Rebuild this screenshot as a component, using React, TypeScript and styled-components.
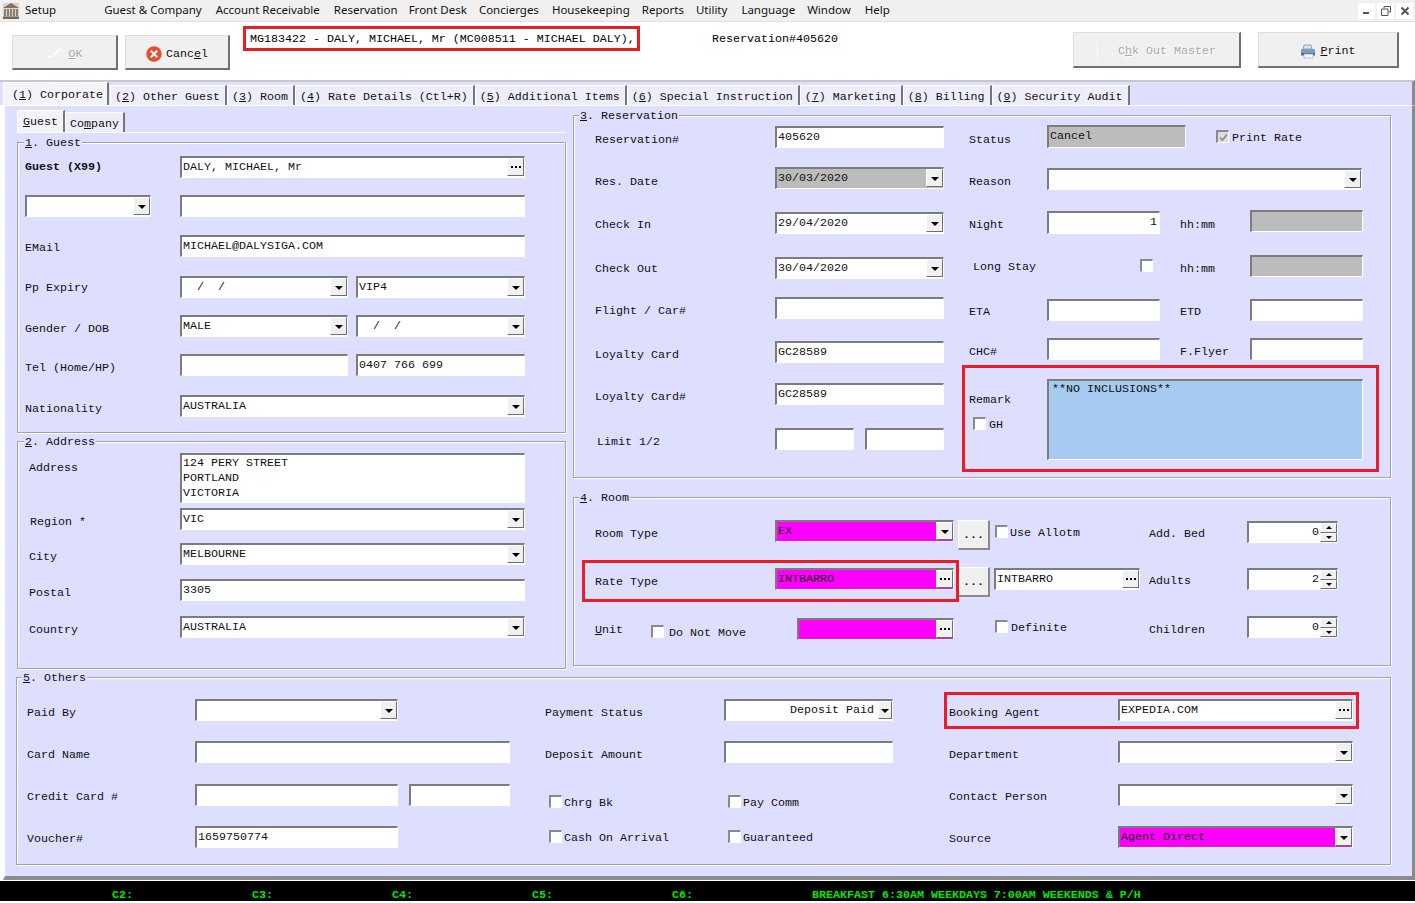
import React from 'react'
import styled, { createGlobalStyle, css } from 'styled-components'

const GlobalStyle = createGlobalStyle`
  html, body {
    margin: 0;
    padding: 0;
    background: #fff;
    overflow: hidden;
  }
  * { box-sizing: border-box; }
`

const LAVENDER = '#dedeff'
const MAGENTA = '#ff00ff'

type Placed = { $col?: string; $row?: number; $top?: number; $w?: number }

const place = css<Placed>`
  grid-column: ${p => p.$col ?? 'auto'};
  grid-row: ${p => p.$row ?? 'auto'};
  margin-top: ${p => p.$top ?? 0}px;
  ${p => (p.$w ? `width: ${p.$w}px;` : '')}
`

const Page = styled.div`
  width: 1415px;
  height: 903px;
  display: flex;
  flex-direction: column;
  font-family: 'Liberation Mono', 'Courier New', monospace;
  font-size: 11.67px;
  line-height: 14px;
  color: #111;
`

/* menu */
const MenuBar = styled.div`
  height: 22px;
  flex: none;
  display: flex;
  align-items: center;
  background: #f0f0f0;
  border-bottom: 1px solid #e2e2e2;
  font-family: 'Noto Sans', sans-serif;
  font-size: 11.5px;
  color: #111;
  padding-left: 2px;
`
const MenuItem = styled.span<{ $x: number }>`
  margin: 0 0 2px ${p => p.$x}px;
  white-space: nowrap;
`
const WindowButtons = styled.div`
  margin-left: auto;
  display: flex;
  gap: 2px;
  padding-right: 2px;
`
const WindowButton = styled.div`
  width: 17px;
  height: 16px;
  background: #fff;
  display: flex;
  align-items: center;
  justify-content: center;
`

/* toolbar */
const Toolbar = styled.div`
  height: 58px;
  flex: none;
  display: flex;
  align-items: flex-start;
  padding: 4px 16px 0 12px;
  background: #fff;
`
const ActionButton = styled.div<{ $w: number; $h: number; $mt: number; $ml?: number; $off?: boolean }>`
  width: ${p => p.$w}px;
  height: ${p => p.$h}px;
  margin-top: ${p => p.$mt}px;
  margin-left: ${p => p.$ml ?? 0}px;
  flex: none;
  display: flex;
  align-items: center;
  justify-content: center;
  gap: 4px;
  padding-top: 3px;
  background: #f0f0f0;
  border-style: solid;
  border-width: 1px 2px 2px 1px;
  border-color: #dcdcdc #707070 #707070 #dcdcdc;
  color: ${p => (p.$off ? '#a8a8a8' : '#111')};
  ${p => (p.$off ? 'text-shadow: 1px 1px 0 #fff;' : '')}
`
const GuestTitle = styled.div`
  width: 397px;
  height: 25px;
  margin-left: 13px;
  flex: none;
  border: 3px solid #ed1c24;
  padding: 3px 0 0 4px;
  white-space: nowrap;
  color: #000;
`
const ReservationNo = styled.div`
  margin: 6px 0 0 72px;
  color: #000;
`
const FaintTick = styled.span`
  width: 1px;
  height: 16px;
  background: #fff;
  margin-right: 16px;
`

/* top tabs */
const TabStrip = styled.div`
  height: 25px;
  flex: none;
  display: flex;
  align-items: flex-end;
  background: ${LAVENDER};
  border-top: 2px solid #c8c8c8;
  border-right: 3px solid #8a8a8a;
  padding-left: 3px;
`
const Tab = styled.div<{ $active?: boolean }>`
  flex: none;
  white-space: pre;
  background: ${p => (p.$active ? '#f4f4f8' : '#eeeefb')};
  border-top: 1px solid #fff;
  border-left: 1px solid #fff;
  border-right: 2px solid #777;
  ${p =>
    p.$active
      ? css`
          height: 23px;
          padding: 5px 5px 0 8px;
          width: 106px;
          margin-right: 1px;
        `
      : css`
          height: 20px;
          padding: 4px 5px 0 4px;
        `}
`
const TabBody = styled.div`
  flex: 1;
  min-height: 0;
  background: ${LAVENDER};
  border-top: 1px solid #fff;
  border-left: 2px solid #fff;
  border-right: 3px solid #8a8a8a;
  border-bottom: 4px solid #8c8c8c;
  margin-left: 3px;
  padding: 5px 0 0 12px;
`
const Columns = styled.div`
  display: grid;
  grid-template-columns: 549px 818px;
  column-gap: 7px;
  height: 558px;
`
const LeftColumn = styled.div`
  display: flex;
  flex-direction: column;
`
const RightColumn = styled.div`
  display: flex;
  flex-direction: column;
  gap: 19px;
  padding-top: 4px;
`
const SubTabs = styled.div`
  height: 22px;
  flex: none;
  display: flex;
  align-items: flex-end;
  border-bottom: 1px solid #fff;
  margin-bottom: 9px;
`
const SubTab = styled.div<{ $active?: boolean }>`
  height: ${p => (p.$active ? 22 : 20)}px;
  padding: ${p => (p.$active ? '4px 5px 0 5px' : '4px 4px 0 4px')};
  background: ${p => (p.$active ? '#f4f4f8' : '#eeeefb')};
  border-top: 1px solid #fff;
  border-left: 1px solid #fff;
  border-right: 2px solid #777;
  white-space: nowrap;
`

/* group boxes */
const Group = styled.section<{ $h: number; $mt?: number; $pt: number; $pl: number; $cols: string; $rows: string; $shift?: number; $width?: number }>`
  position: relative;
  flex: none;
  height: ${p => p.$h}px;
  ${p => (p.$width ? `width: ${p.$width}px;` : '')}
  margin-top: ${p => p.$mt ?? 0}px;
  margin-left: ${p => p.$shift ?? 0}px;
  padding: ${p => p.$pt}px 0 0 ${p => p.$pl}px;
  border: 1px solid #a2a2a2;
  box-shadow: inset 1px 1px 0 #fff, 1px 1px 0 #fff;
  display: grid;
  grid-template-columns: ${p => p.$cols};
  grid-template-rows: ${p => p.$rows};
  align-items: start;
`
const Legend = styled.span<{ $left: number }>`
  position: absolute;
  top: -7px;
  left: ${p => p.$left}px;
  padding: 0 1px;
  background: ${LAVENDER};
`
const RedBox = styled.div<{ $left: number; $topAt: number; $bw: number; $bh: number }>`
  position: absolute;
  left: ${p => p.$left}px;
  top: ${p => p.$topAt}px;
  width: ${p => p.$bw}px;
  height: ${p => p.$bh}px;
  border: 3px solid #ed1c24;
  pointer-events: none;
`

/* form parts */
const FieldLabel = styled.div<Placed & { $bold?: boolean; $indent?: number }>`
  ${place}
  white-space: nowrap;
  padding: 1px 0 0 ${p => p.$indent ?? 0}px;
  font-weight: ${p => (p.$bold ? 700 : 400)};
`
const sunken = css`
  border-style: solid;
  border-width: 2px 1px 1px 2px;
  border-color: #7c7c7c #fff #fff #7c7c7c;
`
const TextBox = styled.div<Placed & { $bg?: string; $h?: number; $right?: boolean }>`
  ${place}
  ${sunken}
  height: ${p => p.$h ?? 22}px;
  background: ${p => p.$bg ?? '#fff'};
  padding: 2px ${p => (p.$right ? 2 : 0)}px 0 1px;
  text-align: ${p => (p.$right ? 'right' : 'left')};
  white-space: pre;
  overflow: hidden;
  color: #111;
`
const BoxFrame = styled.div<Placed & { $bg?: string }>`
  ${place}
  ${sunken}
  height: 22px;
  display: flex;
  background: ${p => p.$bg ?? '#fff'};
`
const BoxText = styled.span<{ $pr?: number; $right?: boolean }>`
  flex: 1;
  min-width: 0;
  padding: 2px ${p => p.$pr ?? 0}px 0 1px;
  text-align: ${p => (p.$right ? 'right' : 'left')};
  white-space: pre;
  overflow: hidden;
`
const SideButton = styled.div<{ $w?: number }>`
  width: ${p => p.$w ?? 17}px;
  flex: none;
  height: 18px;
  display: flex;
  align-items: center;
  justify-content: center;
  background: #f0f0f0;
  border-style: solid;
  border-width: 1px;
  border-color: #fff #6f6f6f #6f6f6f #fff;
`
const Arrow = styled.span`
  width: 0;
  height: 0;
  margin-top: 2px;
  border-left: 4px solid transparent;
  border-right: 4px solid transparent;
  border-top: 4px solid #000;
`
const Dots = styled.span`
  width: 2px;
  height: 2px;
  background: #000;
  box-shadow: -4px 0 0 #000, 4px 0 0 #000;
`
const SpinColumn = styled.div`
  width: 17px;
  flex: none;
  display: flex;
  flex-direction: column;
`
const SpinButton = styled.div`
  flex: 1;
  height: 9px;
  display: flex;
  align-items: center;
  justify-content: center;
  background: #f0f0f0;
  border: 1px solid;
  border-color: #fff #6f6f6f #6f6f6f #fff;
`
const SpinUp = styled.span`
  border-left: 3px solid transparent;
  border-right: 3px solid transparent;
  border-bottom: 3px solid #000;
`
const SpinDown = styled.span`
  border-left: 3px solid transparent;
  border-right: 3px solid transparent;
  border-top: 3px solid #000;
`
const BrowseButton = styled.div<Placed>`
  ${place}
  height: 30px;
  background: #f0f0f0;
  border-style: solid;
  border-width: 1px 2px 2px 1px;
  border-color: #fff #8a8a8a #8a8a8a #fff;
  text-align: center;
  font-weight: 700;
  padding-top: 7px;
`
const CheckRow = styled.div<Placed & { $gap?: number; $indent?: number }>`
  ${place}
  display: flex;
  align-items: flex-start;
  gap: ${p => p.$gap ?? 3}px;
  padding-left: ${p => p.$indent ?? 0}px;
  white-space: nowrap;
  span + span {
    margin-top: 1px;
  }
`
const CheckBox = styled.span<Placed & { $checked?: boolean; $left?: number }>`
  ${place}
  width: 13px;
  height: 13px;
  flex: none;
  margin-left: ${p => p.$left ?? 0}px;
  border-style: solid;
  border-width: 2px 1px 1px 2px;
  border-color: #8a8a8a #fff #fff #8a8a8a;
  background: ${p => (p.$checked ? '#dcdcdc' : '#fff')};
  display: flex;
  align-items: center;
  justify-content: center;
`
const InlineRow = styled.div<Placed & { $gap?: number }>`
  ${place}
  display: flex;
  align-items: flex-start;
  gap: ${p => p.$gap ?? 0}px;
`
const AddressLines = styled(TextBox)`
  padding-top: 1px;
  line-height: 15px;
`
const RemarkBox = styled(TextBox)`
  grid-row-end: span 2;
  padding: 1px 0 0 3px;
  background: #a6caf0;
`
const UnitLookup = styled.div`
  margin-left: auto;
`

/* status */
const StatusBar = styled.div`
  height: 20px;
  flex: none;
  background: #000;
  color: #00e800;
  display: flex;
  align-items: center;
  padding: 7px 0 0 112px;
  font-weight: 700;
  margin: 1px 0 2px;
`
const StatusCell = styled.span`
  width: 140px;
  flex: none;
  white-space: nowrap;
`

type BoxProps = Placed & { value?: string; bg?: string; narrow?: boolean; rightPad?: number }

const Combo = ({ value = '', bg, narrow, rightPad, ...rest }: BoxProps) => (
  <BoxFrame {...rest} $bg={bg}>
    <BoxText $right={rightPad !== undefined} $pr={rightPad}>{value}</BoxText>
    <SideButton $w={narrow ? 14 : 17}><Arrow /></SideButton>
  </BoxFrame>
)

const Lookup = ({ value = '', bg, ...rest }: BoxProps) => (
  <BoxFrame {...rest} $bg={bg}>
    <BoxText>{value}</BoxText>
    <SideButton><Dots /></SideButton>
  </BoxFrame>
)

const Spin = ({ value = '', ...rest }: BoxProps) => (
  <BoxFrame {...rest}>
    <BoxText $right $pr={1}>{value}</BoxText>
    <SpinColumn>
      <SpinButton><SpinUp /></SpinButton>
      <SpinButton><SpinDown /></SpinButton>
    </SpinColumn>
  </BoxFrame>
)

const TickMark = () => (
  <svg width="9" height="9" viewBox="0 0 9 9">
    <path d="M1 4.5 L3.5 7 L8 1.5" fill="none" stroke="#8a8a8a" strokeWidth="1.6" />
  </svg>
)

const BuildingIcon = () => (
  <svg width="18" height="18" viewBox="0 0 18 18">
    <rect x="1" y="1" width="16" height="16" fill="#d8d4cc" />
    <path d="M1 6 L9 1 L17 6 Z" fill="#8b6f5a" />
    <path d="M3 7v7M6 7v7M9 7v7M12 7v7M15 7v7" stroke="#6d5a4c" strokeWidth="1.4" />
    <rect x="1" y="14.5" width="16" height="2.5" fill="#77655a" />
  </svg>
)

const CancelIcon = () => (
  <svg width="16" height="16" viewBox="0 0 16 16">
    <circle cx="8" cy="8" r="7.7" fill="#e2502f" />
    <path d="M4.8 4.8 L11.2 11.2 M11.2 4.8 L4.8 11.2" stroke="#fff" strokeWidth="2" />
  </svg>
)

const OkIcon = () => (
  <svg width="18" height="12" viewBox="0 0 18 12">
    <path d="M1 9 Q3 7 4 9 M6 8 Q10 2 16 1" fill="none" stroke="#fff" strokeWidth="1.4" />
  </svg>
)

const PrinterIcon = () => (
  <svg width="16" height="15" viewBox="0 0 16 15">
    <path d="M4 1 H11 L12 5 H3 Z" fill="#dbe4ee" stroke="#6f88a6" strokeWidth="0.7" />
    <rect x="1" y="5" width="14" height="6" rx="1" fill="#7c9cc0" />
    <rect x="1" y="9" width="14" height="2.5" fill="#47709c" />
    <rect x="4" y="10" width="9" height="4" fill="#f6f6f6" stroke="#8aa0b8" strokeWidth="0.6" />
  </svg>
)

const menuItems: [string, number][] = [
  ['Guest & Company', 48],
  ['Account Receivable', 14],
  ['Reservation', 14],
  ['Front Desk', 11],
  ['Concierges', 12],
  ['Housekeeping', 13],
  ['Reports', 12],
  ['Utility', 12],
  ['Language', 14],
  ['Window', 12],
  ['Help', 14],
]

const tabs: [string, string][] = [
  ['2', 'Other Guest'],
  ['3', 'Room'],
  ['4', 'Rate Details (Ctl+R)'],
  ['5', 'Additional Items'],
  ['6', 'Special Instruction'],
  ['7', 'Marketing'],
  ['8', 'Billing'],
  ['9', 'Security Audit'],
]

const statusCells = ['C2:', 'C3:', 'C4:', 'C5:', 'C6:', 'BREAKFAST 6:30AM WEEKDAYS 7:00AM WEEKENDS & P/H']

export default function App() {
  return (
    <Page>
      <GlobalStyle />
      <MenuBar>
        <BuildingIcon />
        <MenuItem $x={5}>Setup</MenuItem>
        {menuItems.map(([name, x]) => (
          <MenuItem key={name} $x={x}>{name}</MenuItem>
        ))}
        <WindowButtons>
          <WindowButton>
            <svg width="9" height="9" viewBox="0 0 9 9"><rect x="1" y="6" width="6" height="2" fill="#555" /></svg>
          </WindowButton>
          <WindowButton>
            <svg width="10" height="10" viewBox="0 0 10 10">
              <path d="M3 2.5 V0.5 H9.5 V6 H7.5 M0.5 3 H7 V9.5 H0.5 Z" fill="none" stroke="#555" />
            </svg>
          </WindowButton>
          <WindowButton>
            <svg width="10" height="10" viewBox="0 0 10 10">
              <path d="M1.5 1.5 L8.5 8.5 M8.5 1.5 L1.5 8.5" stroke="#555" strokeWidth="2" />
            </svg>
          </WindowButton>
        </WindowButtons>
      </MenuBar>

      <Toolbar>
        <ActionButton $w={106} $h={35} $mt={9} $off>
          <OkIcon />
          <span><u>O</u>K</span>
        </ActionButton>
        <ActionButton $w={105} $h={35} $mt={9} $ml={7}>
          <CancelIcon />
          <span>Canc<u>e</u>l</span>
        </ActionButton>
        <GuestTitle>MG183422 - DALY, MICHAEL, Mr (MC008511 - MICHAEL DALY),</GuestTitle>
        <ReservationNo>Reservation#405620</ReservationNo>
        <ActionButton $w={168} $h={36} $mt={6} $ml={235} $off>
          <FaintTick />
          <span>C<u>h</u>k Out Master</span>
        </ActionButton>
        <ActionButton $w={141} $h={36} $mt={6} $ml={17}>
          <PrinterIcon />
          <span><u>P</u>rint</span>
        </ActionButton>
      </Toolbar>

      <TabStrip>
        <Tab $active>(<u>1</u>) Corporate</Tab>
        {tabs.map(([key, name]) => (
          <Tab key={key}>(<u>{key}</u>) {name}</Tab>
        ))}
      </TabStrip>

      <TabBody>
        <Columns>
          <LeftColumn>
            <SubTabs>
              <SubTab $active><u>G</u>uest</SubTab>
              <SubTab>Co<u>m</u>pany</SubTab>
            </SubTabs>

            <Group $h={291} $pt={13} $pl={7} $cols="155px 168px 8px 169px" $rows="39px 40px 41px 39px 39px 41px 39px">
              <Legend $left={6}><u>1</u>. Guest</Legend>
              <FieldLabel $col="1" $row={1} $top={3} $bold>Guest (X99)</FieldLabel>
              <Lookup $col="2 / 5" $row={1} value="DALY, MICHAEL, Mr" />
              <Combo $col="1" $row={2} $w={126} />
              <TextBox $col="2 / 5" $row={2} />
              <FieldLabel $col="1" $row={3} $top={5}>EMail</FieldLabel>
              <TextBox $col="2 / 5" $row={3}>MICHAEL@DALYSIGA.COM</TextBox>
              <FieldLabel $col="1" $row={4} $top={4}>Pp Expiry</FieldLabel>
              <Combo $col="2" $row={4} value="  /  /" />
              <Combo $col="4" $row={4} value="VIP4" />
              <FieldLabel $col="1" $row={5} $top={6}>Gender / DOB</FieldLabel>
              <Combo $col="2" $row={5} value="MALE" />
              <Combo $col="4" $row={5} value="  /  /" />
              <FieldLabel $col="1" $row={6} $top={6}>Tel (Home/HP)</FieldLabel>
              <TextBox $col="2" $row={6} />
              <TextBox $col="4" $row={6}>0407 766 699</TextBox>
              <FieldLabel $col="1" $row={7} $top={6}>Nationality</FieldLabel>
              <Combo $col="2 / 5" $row={7} value="AUSTRALIA" />
            </Group>

            <Group $h={228} $mt={8} $pt={11} $pl={11} $cols="151px 345px" $rows="55px 35px 36px 37px 30px">
              <Legend $left={6}><u>2</u>. Address</Legend>
              <FieldLabel $col="1" $row={1} $top={7}>Address</FieldLabel>
              <AddressLines $col="2" $row={1} $h={50}>{'124 PERY STREET\nPORTLAND\nVICTORIA'}</AddressLines>
              <FieldLabel $col="1" $row={2} $top={6} $indent={1}>Region *</FieldLabel>
              <Combo $col="2" $row={2} value="VIC" />
              <FieldLabel $col="1" $row={3} $top={6}>City</FieldLabel>
              <Combo $col="2" $row={3} value="MELBOURNE" />
              <FieldLabel $col="1" $row={4} $top={6}>Postal</FieldLabel>
              <TextBox $col="2" $row={4}>3305</TextBox>
              <FieldLabel $col="1" $row={5} $top={6}>Country</FieldLabel>
              <Combo $col="2" $row={5} value="AUSTRALIA" />
            </Group>
          </LeftColumn>

          <RightColumn>
            <Group
              $h={363}
              $pt={10}
              $pl={21}
              $cols="180px 169px 25px 78px 113px 20px 70px 113px"
              $rows="41px 45px 45px 40px 44px 42px 45px 30px"
            >
              <Legend $left={5}><u>3</u>. Reservation</Legend>
              <FieldLabel $col="1" $row={1} $top={6}>Reservation#</FieldLabel>
              <TextBox $col="2" $row={1}>405620</TextBox>
              <FieldLabel $col="4" $row={1} $top={6}>Status</FieldLabel>
              <InlineRow $col="5 / -1" $row={1} $top={-1} $gap={30}>
                <TextBox $w={139} $h={23} $bg="#bcbcbc">Cancel</TextBox>
                <CheckRow $top={5}>
                  <CheckBox $checked><TickMark /></CheckBox>
                  <span>Print Rate</span>
                </CheckRow>
              </InlineRow>

              <FieldLabel $col="1" $row={2} $top={7}>Res. Date</FieldLabel>
              <Combo $col="2" $row={2} value="30/03/2020" bg="#bcbcbc" />
              <FieldLabel $col="4" $row={2} $top={7}>Reason</FieldLabel>
              <Combo $col="5 / -1" $row={2} $top={1} $w={315} />

              <FieldLabel $col="1" $row={3} $top={5}>Check In</FieldLabel>
              <Combo $col="2" $row={3} value="29/04/2020" />
              <FieldLabel $col="4" $row={3} $top={5}>Night</FieldLabel>
              <TextBox $col="5" $row={3} $top={-1} $h={23} $right>1</TextBox>
              <FieldLabel $col="7" $row={3} $top={5}>hh:mm</FieldLabel>
              <TextBox $col="8" $row={3} $top={-2} $bg="#bcbcbc" />

              <FieldLabel $col="1" $row={4} $top={4}>Check Out</FieldLabel>
              <Combo $col="2" $row={4} value="30/04/2020" />
              <FieldLabel $col="4 / 6" $row={4} $top={2} $indent={4}>Long Stay</FieldLabel>
              <CheckBox $col="5" $row={4} $top={2} $left={93} />
              <FieldLabel $col="7" $row={4} $top={4}>hh:mm</FieldLabel>
              <TextBox $col="8" $row={4} $top={-2} $bg="#bcbcbc" />

              <FieldLabel $col="1" $row={5} $top={6}>Flight / Car#</FieldLabel>
              <TextBox $col="2" $row={5} />
              <FieldLabel $col="4" $row={5} $top={7}>ETA</FieldLabel>
              <TextBox $col="5" $row={5} $top={2} />
              <FieldLabel $col="7" $row={5} $top={7}>ETD</FieldLabel>
              <TextBox $col="8" $row={5} $top={2} />

              <FieldLabel $col="1" $row={6} $top={6}>Loyalty Card</FieldLabel>
              <TextBox $col="2" $row={6}>GC28589</TextBox>
              <FieldLabel $col="4" $row={6} $top={3}>CHC#</FieldLabel>
              <TextBox $col="5" $row={6} $top={-3} />
              <FieldLabel $col="7" $row={6} $top={3}>F.Flyer</FieldLabel>
              <TextBox $col="8" $row={6} $top={-3} />

              <FieldLabel $col="1" $row={7} $top={6}>Loyalty Card#</FieldLabel>
              <TextBox $col="2" $row={7}>GC28589</TextBox>
              <FieldLabel $col="4" $row={7} $top={9}>Remark</FieldLabel>
              <CheckRow $col="4" $row={7} $top={34} $indent={4} $gap={3}>
                <CheckBox />
                <span>GH</span>
              </CheckRow>
              <RemarkBox $col="5 / -1" $row={7} $top={-4} $h={81} $w={316}>**NO INCLUSIONS**</RemarkBox>

              <FieldLabel $col="1" $row={8} $top={6} $indent={2}>Limit 1/2</FieldLabel>
              <InlineRow $col="2" $row={8} $gap={11}>
                <TextBox $w={79} />
                <TextBox $w={79} />
              </InlineRow>
              <RedBox $left={388} $topAt={249} $bw={417} $bh={107} />
            </Group>

            <Group
              $h={169}
              $pt={22}
              $pl={21}
              $cols="180px 179px 4px 32px 4px 146px 9px 98px 91px"
              $rows="48px 50px 40px"
            >
              <Legend $left={5}><u>4</u>. Room</Legend>
              <FieldLabel $col="1" $row={1} $top={6}>Room Type</FieldLabel>
              <Combo $col="2" $row={1} value="EX" bg={MAGENTA} />
              <BrowseButton $col="4" $row={1}>...</BrowseButton>
              <CheckRow $col="6" $row={1} $top={5} $indent={1} $gap={2}>
                <CheckBox />
                <span>Use Allotm</span>
              </CheckRow>
              <FieldLabel $col="8" $row={1} $top={6}>Add. Bed</FieldLabel>
              <Spin $col="9" $row={1} $top={1} value="0" />

              <FieldLabel $col="1" $row={2} $top={6}>Rate Type</FieldLabel>
              <Lookup $col="2" $row={2} value="INTBARRO" bg={MAGENTA} />
              <BrowseButton $col="4" $row={2} $top={-1}>...</BrowseButton>
              <Lookup $col="6" $row={2} value="INTBARRO" />
              <FieldLabel $col="8" $row={2} $top={5}>Adults</FieldLabel>
              <Spin $col="9" $row={2} value="2" />

              <InlineRow $col="1 / 3" $row={3}>
                <FieldLabel $top={4} $w={56}><u>U</u>nit</FieldLabel>
                <CheckRow $top={7} $gap={5}>
                  <CheckBox />
                  <span>Do Not Move</span>
                </CheckRow>
                <UnitLookup><Lookup $w={157} bg={MAGENTA} /></UnitLookup>
              </InlineRow>
              <CheckRow $col="6" $row={3} $top={2} $indent={1} $gap={3}>
                <CheckBox />
                <span>Definite</span>
              </CheckRow>
              <FieldLabel $col="8" $row={3} $top={4}>Children</FieldLabel>
              <Spin $col="9" $row={3} $top={-2} value="0" />

              <RedBox $left={8} $topAt={62} $bw={377} $bh={42} />
            </Group>
          </RightColumn>
        </Columns>

        <Group
          $h={188}
          $mt={8}
          $pt={21}
          $pl={10}
          $shift={-1}
          $width={1375}
          $cols="168px 203px 11px 101px 35px 179px 169px 56px 169px 235px"
          $rows="42px 43px 42px 30px"
        >
          <Legend $left={5}><u>5</u>. Others</Legend>
          <FieldLabel $col="1" $row={1} $top={6}>Paid By</FieldLabel>
          <Combo $col="2" $row={1} />
          <FieldLabel $col="6" $row={1} $top={6}>Payment Status</FieldLabel>
          <Combo $col="7" $row={1} value="Deposit Paid" rightPad={4} narrow />
          <FieldLabel $col="9" $row={1} $top={6}>Booking Agent</FieldLabel>
          <Lookup $col="10" $row={1} value="EXPEDIA.COM" />

          <FieldLabel $col="1" $row={2} $top={6}>Card Name</FieldLabel>
          <TextBox $col="2 / 5" $row={2} />
          <FieldLabel $col="6" $row={2} $top={6}>Deposit Amount</FieldLabel>
          <TextBox $col="7" $row={2} />
          <FieldLabel $col="9" $row={2} $top={6}>Department</FieldLabel>
          <Combo $col="10" $row={2} />

          <FieldLabel $col="1" $row={3} $top={5}>Credit Card #</FieldLabel>
          <TextBox $col="2" $row={3} />
          <TextBox $col="4" $row={3} />
          <CheckRow $col="6" $row={3} $top={11} $indent={4} $gap={2}>
            <CheckBox />
            <span>Chrg Bk</span>
          </CheckRow>
          <CheckRow $col="7" $row={3} $top={11} $indent={4} $gap={2}>
            <CheckBox />
            <span>Pay Comm</span>
          </CheckRow>
          <FieldLabel $col="9" $row={3} $top={5}>Contact Person</FieldLabel>
          <Combo $col="10" $row={3} />

          <FieldLabel $col="1" $row={4} $top={5}>Voucher#</FieldLabel>
          <TextBox $col="2" $row={4}>1659750774</TextBox>
          <CheckRow $col="6" $row={4} $top={4} $indent={4} $gap={2}>
            <CheckBox />
            <span>Cash On Arrival</span>
          </CheckRow>
          <CheckRow $col="7" $row={4} $top={4} $indent={4} $gap={2}>
            <CheckBox />
            <span>Guaranteed</span>
          </CheckRow>
          <FieldLabel $col="9" $row={4} $top={5}>Source</FieldLabel>
          <Combo $col="10" $row={4} value="Agent Direct" bg={MAGENTA} />

          <RedBox $left={927} $topAt={14} $bw={415} $bh={37} />
        </Group>
      </TabBody>

      <StatusBar>
        {statusCells.map(text => (
          <StatusCell key={text}>{text}</StatusCell>
        ))}
      </StatusBar>
    </Page>
  )
}
